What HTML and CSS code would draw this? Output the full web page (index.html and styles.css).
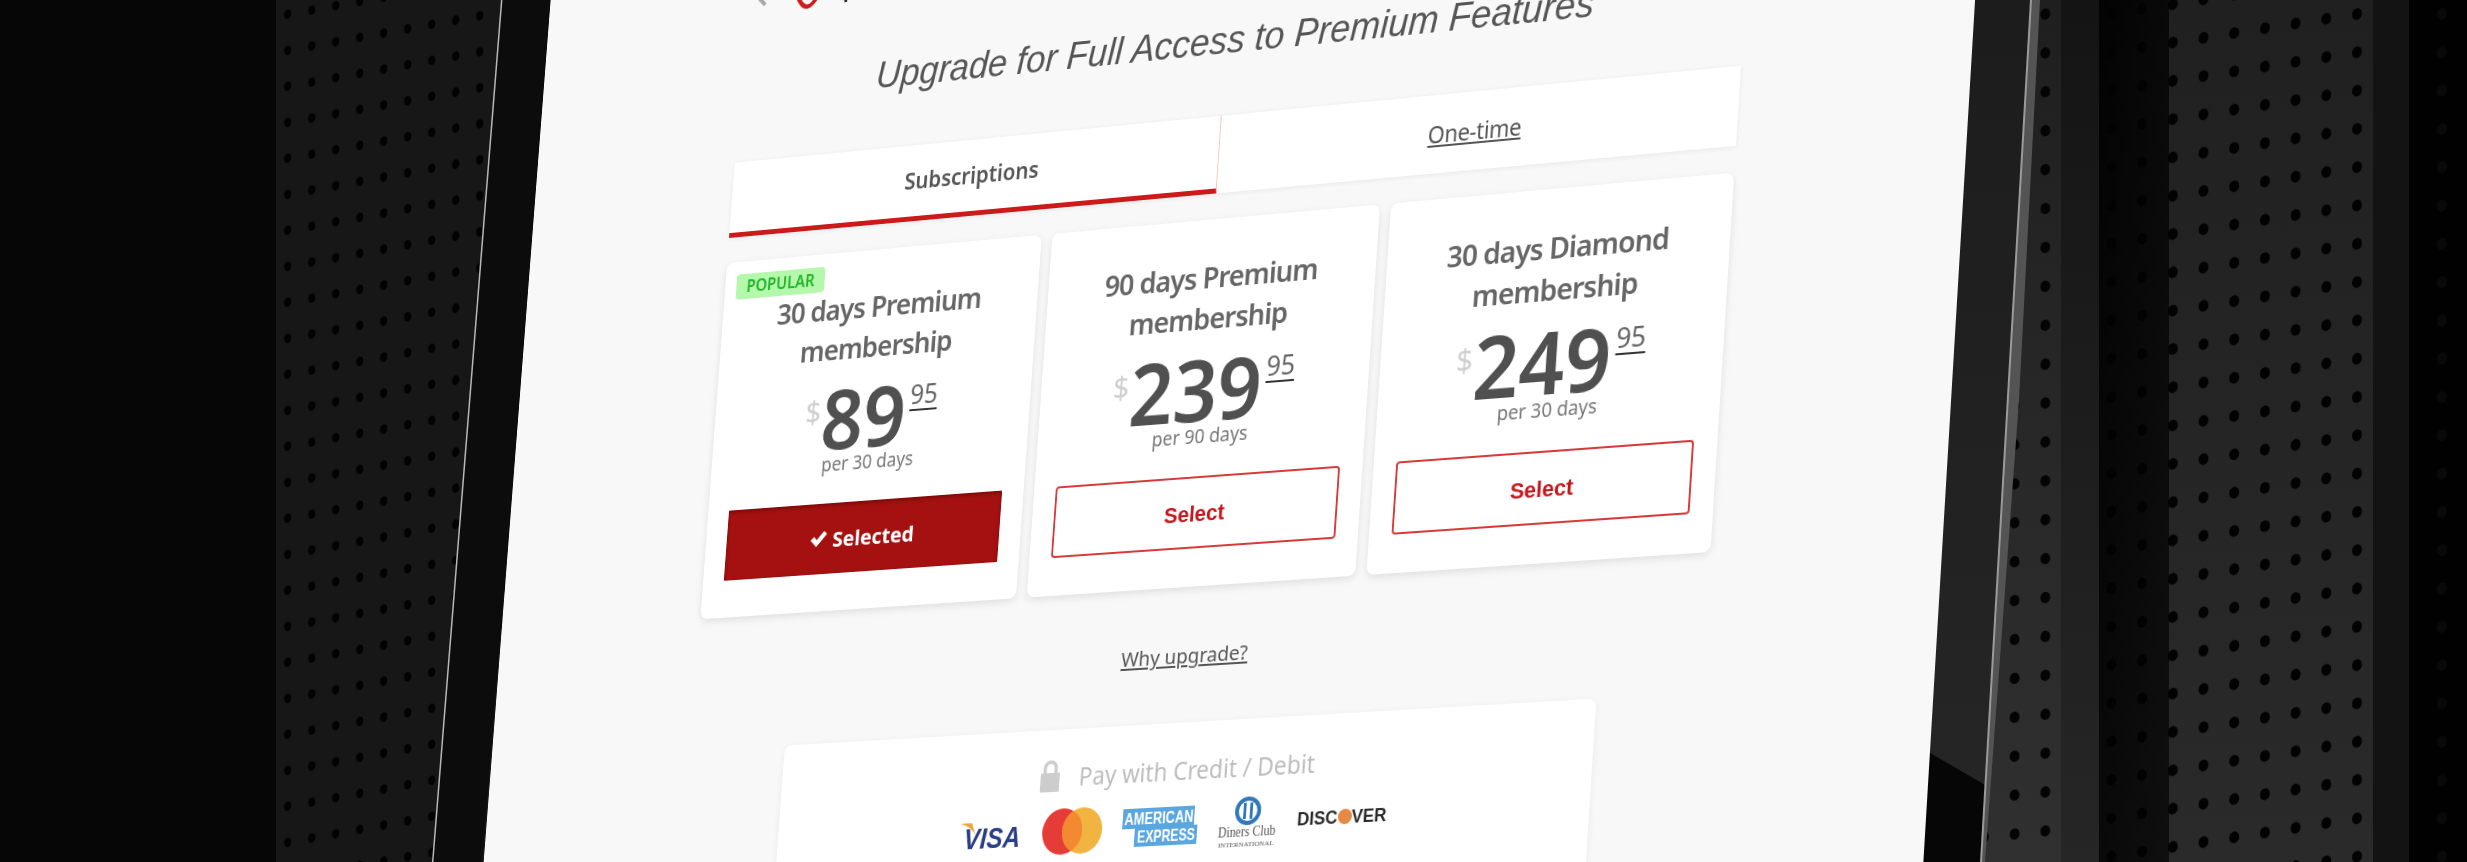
FILE: index.html
```html
<!DOCTYPE html>
<html lang="en">
<head>
<meta charset="utf-8">
<title>Upgrade</title>
<link rel="stylesheet" href="styles.css">
</head>
<body>
<div class="stage">
  <svg class="backdrop" width="2467" height="862" viewBox="0 0 2467 862" aria-hidden="true">
    <defs>
      <pattern id="holesLeft" width="24" height="36" patternUnits="userSpaceOnUse" patternTransform="translate(275.7,-1.54) skewY(-10.2)">
        <ellipse cx="12" cy="18" rx="3.7" ry="4.8" fill="#020202"/>
      </pattern>
      <pattern id="holesA" width="30.7" height="38.9" patternUnits="userSpaceOnUse" patternTransform="translate(2029.95,-3.9) skewY(-5.71)">
        <ellipse cx="15.35" cy="19.45" rx="5" ry="5.8" fill="#040404"/>
      </pattern>
      <pattern id="holesB" width="30.7" height="38.3" patternUnits="userSpaceOnUse" patternTransform="translate(2341.65,-2.77) skewY(-8.81)">
        <ellipse cx="15.35" cy="19.15" rx="5" ry="5.8" fill="#020202"/>
      </pattern>
      <pattern id="holesC" width="30.7" height="38.3" patternUnits="userSpaceOnUse" patternTransform="translate(2426.65,-2.77) skewY(-8.81)">
        <ellipse cx="15.35" cy="19.15" rx="5" ry="5.8" fill="#090909"/>
      </pattern>
      <linearGradient id="gBandA" x1="0" y1="0" x2="0" y2="1"><stop offset="0" stop-color="#1f1f1f"/><stop offset="1" stop-color="#303030"/></linearGradient>
      <linearGradient id="gBandB" x1="0" y1="0" x2="0" y2="1"><stop offset="0" stop-color="#141414"/><stop offset="1" stop-color="#262626"/></linearGradient>
      <linearGradient id="gBandC" x1="0" y1="0" x2="1" y2="1"><stop offset="0" stop-color="#030303"/><stop offset="1" stop-color="#0f0f0f"/></linearGradient>
      <linearGradient id="gBandD" x1="0" y1="0" x2="0" y2="1"><stop offset="0" stop-color="#202020"/><stop offset="1" stop-color="#2a2a2a"/></linearGradient>
      <linearGradient id="gBezel" x1="0" y1="0" x2="0" y2="1"><stop offset="0" stop-color="#1c1c1c"/><stop offset="1" stop-color="#262626"/></linearGradient>
    </defs>
    <rect x="0" y="0" width="2467" height="862" fill="#060606"/>
    <rect x="276" y="0" width="240" height="862" fill="#171717"/>
    <rect x="276" y="0" width="240" height="862" fill="url(#holesLeft)"/>
    <rect x="1980" y="0" width="81" height="862" fill="url(#gBandA)"/>
    <rect x="1980" y="0" width="81" height="862" fill="url(#holesA)"/>
    <rect x="2061" y="0" width="38" height="862" fill="url(#gBandB)"/>
    <rect x="2099" y="0" width="70" height="862" fill="url(#gBandC)"/>
    <rect x="2169" y="0" width="204" height="862" fill="url(#gBandD)"/>
    <rect x="2099" y="0" width="274" height="862" fill="url(#holesB)"/>
    <rect x="2373" y="0" width="36" height="862" fill="#131313"/>
    <rect x="2409" y="0" width="58" height="862" fill="#010101"/>
    <rect x="2430" y="0" width="30" height="862" fill="url(#holesC)"/>
    <polygon points="501.7,0 552,0 482,862 432.7,862" fill="#0c0c0c"/>
    <line x1="501.7" y1="0" x2="432.7" y2="862" stroke="#b8b8b8" stroke-width="1.5"/>
    <polygon points="2031,0 2040,0 2019,400 1985,862 1981,862" fill="#545454"/>
    <polygon points="1965,0 2031,0 1981,862 1915,862" fill="url(#gBezel)"/>
    <polygon points="1925,750 1985,785 1981,862 1915,862" fill="#060606"/>
    <line x1="2031" y1="0" x2="1981" y2="862" stroke="#9a9a9a" stroke-width="2"/>
  </svg>

  <main class="screen">
    <svg class="logo" width="200" height="50" viewBox="0 0 200 50" aria-hidden="true">
      <path class="logo-gray" d="M8 24 L22 38"/>
      <path class="logo-red" d="M58 30 Q 70 58 84 32"/>
      <path class="logo-black" d="M112 30 L116 44"/>
    </svg>

    <h1 class="headline">Upgrade for Full Access to Premium Features</h1>

    <div class="tabs">
      <div class="tab tab-active">Subscriptions</div>
      <div class="tab"><a class="tab-link">One-time</a></div>
    </div>

    <section class="plans">
      <article class="plan">
        <span class="badge">POPULAR</span>
        <h2 class="plan-name">30 days Premium membership</h2>
        <div class="price"><span class="cur">$</span><span class="amount">89</span><span class="cents">95</span></div>
        <p class="period">per 30 days</p>
        <button class="btn btn-selected"><svg class="check" width="20" height="18" viewBox="0 0 20 18" aria-hidden="true"><path d="M1 10 L5 6.5 L8 10 L16 1 L19.5 4 L8 17 Z"/></svg>Selected</button>
      </article>
      <article class="plan">
        <h2 class="plan-name">90 days Premium membership</h2>
        <div class="price"><span class="cur">$</span><span class="amount">239</span><span class="cents">95</span></div>
        <p class="period">per 90 days</p>
        <button class="btn btn-outline">Select</button>
      </article>
      <article class="plan">
        <h2 class="plan-name">30 days Diamond membership</h2>
        <div class="price"><span class="cur">$</span><span class="amount">249</span><span class="cents">95</span></div>
        <p class="period">per 30 days</p>
        <button class="btn btn-outline">Select</button>
      </article>
    </section>

    <a class="why">Why upgrade?</a>

    <section class="pay">
      <div class="pay-head">
        <svg class="lock" width="23" height="33" viewBox="0 0 23 33" aria-hidden="true">
          <path class="lock-arc" d="M5.5 15 V9 a6 6 0 0 1 12 0 V15"/>
          <rect class="lock-body" x="1" y="14" width="21" height="19" rx="1"/>
        </svg>
        <span>Pay with Credit / Debit</span>
      </div>
      <div class="cards">
        <svg class="card-logo" width="70" height="32" viewBox="0 0 70 32" aria-hidden="true">
          <path fill="#eea53a" d="M0 3 L13 3 L18 16 Q14 7 0 3 Z"/>
          <text class="visa" x="5" y="29" textLength="63" lengthAdjust="spacingAndGlyphs">VISA</text>
        </svg>
        <svg class="card-logo" width="66" height="46" viewBox="0 0 66 46" aria-hidden="true">
          <ellipse cx="22" cy="23" rx="22" ry="23" fill="#e63c38"/>
          <ellipse cx="44" cy="23" rx="22" ry="23" fill="#f2b440"/>
          <path fill="#f38a31" d="M33 3 A22 23 0 0 1 33 43 A22 23 0 0 1 33 3 Z"/>
        </svg>
        <svg class="card-logo" width="82" height="38" viewBox="0 0 82 38" aria-hidden="true">
          <path fill="#5aa6df" d="M0 0 H78 V19 H82 V38 H14 V20 H0 Z"/>
          <text class="amex" x="2" y="16" textLength="75" lengthAdjust="spacingAndGlyphs">AMERICAN</text>
          <text class="amex" x="17" y="34" textLength="63" lengthAdjust="spacingAndGlyphs">EXPRESS</text>
        </svg>
        <svg class="card-logo" width="64" height="50" viewBox="0 0 64 50" aria-hidden="true">
          <circle cx="32" cy="14" r="12" fill="#fff" stroke="#2f79b9" stroke-width="4"/>
          <path fill="#2f79b9" d="M27 6 H30 V22 H27 Z M34 6 H37 V22 H34 Z"/>
          <text class="diners" x="1" y="39" textLength="62" lengthAdjust="spacingAndGlyphs">Diners Club</text>
          <text class="diners-sub" x="2" y="49" textLength="60" lengthAdjust="spacingAndGlyphs">INTERNATIONAL</text>
        </svg>
        <div class="discover"><span>DISC</span><i class="discover-o"></i><span>VER</span></div>
      </div>
    </section>
  </main>
</div>
</body>
</html>
```
FILE: styles.css
```css
* { box-sizing: border-box; }
html, body { margin: 0; padding: 0; background: #060606; }
.stage { position: relative; width: 2467px; height: 862px; overflow: hidden; }
.backdrop { position: absolute; left: 0; top: 0; display: block; }

.screen {
  position: absolute; left: 0; top: 0;
  width: 1568px; height: 1150px;
  padding: 100px 234px 0;
  background: #f8f8f8;
  display: flex; flex-direction: column;
  font-family: "Noto Sans", "Open Sans", sans-serif;
  color: #555;
  transform-origin: 0 0;
  transform: matrix3d(.816718,-.091882,0,-.000056345, -.081372,.961957,0,-.0000119851, 0,0,1,0, 568,-104.387,0,1.016781);
  filter: blur(.45px);
}

.logo { display: block; flex: none; fill: none; }
.logo-gray { stroke: #a8a8a8; stroke-width: 4; }
.logo-red { stroke: #cc1c1c; stroke-width: 4.5; }
.logo-black { stroke: #222; stroke-width: 3; }

.headline {
  margin: 50px 0 52px;
  font: italic 400 38.8px/48px "Liberation Sans", Arial, sans-serif;
  color: #555;
  text-align: center;
}

.tabs { display: flex; height: 77.5px; flex: none; background: #fff; box-shadow: 0 1px 5px rgba(0,0,0,.07); }
.tab {
  flex: 1 1 50%;
  display: flex; align-items: center; justify-content: center;
  font-size: 23px; color: #555;
}
.tab-active { font-weight: 600; border-bottom: 5px solid #cc1a1a; border-right: 1px solid #f3c4c4; }
.tab-link { text-decoration: underline; letter-spacing: -.3px; }

.plans { display: grid; grid-template-columns: repeat(3, 1fr); gap: 12px; margin-top: 26.5px; flex: none; }
.plan {
  position: relative;
  height: 367px;
  padding: 38px 24px 38px;
  background: #fff;
  border-radius: 8px;
  box-shadow: 0 3px 9px rgba(0,0,0,.1);
  display: flex; flex-direction: column; align-items: stretch;
  text-align: center;
}
.badge {
  position: absolute; left: 13px; top: 13px;
  width: 102px; height: 26px;
  border-radius: 4px;
  background: #b4f8ac;
  color: #25b52a;
  font-size: 17px; font-weight: 600; line-height: 26px;
}
.plan-name { margin: 0; font-size: 29.5px; font-weight: 600; line-height: 40.5px; letter-spacing: -.95px; color: #666; }
.price { display: flex; justify-content: center; align-items: flex-start; margin-top: 16px; }
.cur { margin: 8px 1px 0 0; font-size: 31px; line-height: 36px; color: #cfcfcf; }
.amount { font-size: 84px; font-weight: 600; line-height: 70px; color: #505050; }
.cents {
  margin: 3px 0 0 4px;
  font-size: 27px; line-height: 28px; color: #666;
  text-decoration: underline; text-decoration-color: #333; text-decoration-thickness: 2px; text-underline-offset: 5px;
}
.period { margin: 0; font-size: 19.3px; line-height: 24px; color: #777; }

.btn {
  margin-top: auto;
  height: 72px; width: 100%;
  display: flex; align-items: center; justify-content: center; gap: 6px;
  cursor: pointer;
}
.btn-selected {
  border: 0; border-radius: 1px;
  background: #a51110;
  color: #fff;
  font: 700 22px "Noto Sans", sans-serif;
  box-shadow: inset 0 2px 4px rgba(60,0,0,.45);
}
.check { fill: #fff; flex: none; }
.btn-outline {
  border: 2px solid #d83a3a; border-radius: 4px;
  background: #fff;
  color: #c4161c;
  font: 700 22.4px "Liberation Sans", Arial, sans-serif;
  padding-top: 4px;
}

.why {
  align-self: center;
  margin-top: 55px;
  font-size: 20.5px; line-height: 26px; color: #555;
  text-decoration: underline;
}

.pay {
  flex: 1;
  margin: 53.5px 108.5px 0;
  padding-top: 29px;
  background: #fff;
  border-radius: 8px;
  box-shadow: 0 2px 8px rgba(0,0,0,.06);
  display: flex; flex-direction: column; align-items: center;
}
.pay-head { display: flex; align-items: center; gap: 20px; font-size: 24.5px; line-height: 33px; color: #bdbdbd; }
.pay-head span { position: relative; top: 2px; }
.lock { display: block; flex: none; }
.lock-arc { fill: none; stroke: #cdcdcd; stroke-width: 3.5; }
.lock-body { fill: #cdcdcd; }

.cards { display: flex; align-items: center; gap: 22px; margin: 15px 10px 0 0; }
.card-logo { display: block; flex: none; overflow: visible; }
.visa { font: italic 700 29px "Liberation Sans", Arial, sans-serif; fill: #2b3d86; }
.amex { font: 700 16px "Liberation Sans", Arial, sans-serif; fill: #fff; }
.diners { font: 400 15px "Liberation Serif", serif; fill: #555; }
.diners-sub { font: 400 7px "Liberation Serif", serif; fill: #555; }
.discover {
  display: flex; align-items: center; width: 91px;
  font: 700 18px/22px "Liberation Sans", Arial, sans-serif; color: #2a2a2a;
}
.discover-o { width: 15px; height: 15px; border-radius: 50%; background: #e58a44; flex: none; }
```
